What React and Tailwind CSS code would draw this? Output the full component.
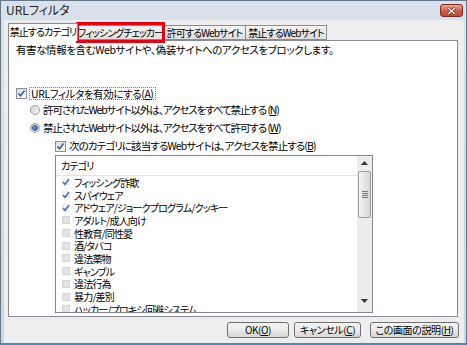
import React from 'react';

const jp = "font-['Noto_Sans_CJK_JP','Noto_Sans',sans-serif] [font-feature-settings:'palt']";

const categories = [
  { name: 'フィッシング詐欺', on: true },
  { name: 'スパイウェア', on: true },
  { name: 'アドウェア/ジョークプログラム/クッキー', on: true },
  { name: 'アダルト/成人向け', on: false },
  { name: '性教育/同性愛', on: false },
  { name: '酒/タバコ', on: false },
  { name: '違法薬物', on: false },
  { name: 'ギャンブル', on: false },
  { name: '違法行為', on: false },
  { name: '暴力/差別', on: false },
  { name: 'ハッカー/プロキシ回避システム', on: false },
];

// Vista風チェックボックス
function CheckBox() {
  return (
    <span className="flex h-[11px] w-[11px] shrink-0 items-center justify-center border border-[#8e8f8f] bg-gradient-to-br from-[#dadada] to-white">
      <svg width="9" height="9" viewBox="0 0 9 9">
        <path d="M1.5 4.5 L3.6 6.8 L7.6 1.6" fill="none" stroke="#3a5a9e" strokeWidth="1.6" />
      </svg>
    </span>
  );
}

function Radio({ checked }) {
  return (
    <span className="flex h-[10px] w-[10px] shrink-0 items-center justify-center rounded-full border border-[#9a9a9a] bg-gradient-to-br from-[#d0d0d0] to-[#fafafa]">
      {checked && (
        <span className="h-[6px] w-[6px] rounded-full border border-[#1f4e9c] bg-gradient-to-br from-[#7fb2f0] to-[#1d5fc4]" />
      )}
    </span>
  );
}

function SmallCheck({ on }) {
  if (on) {
    return (
      <span className="flex h-[8px] w-[8px] shrink-0 items-center justify-center bg-[#eef1f6]">
        <svg width="8" height="8" viewBox="0 0 8 8">
          <path d="M1 4 L3 6.3 L7 1.3" fill="none" stroke="#4a68b0" strokeWidth="1.5" />
        </svg>
      </span>
    );
  }
  return <span className="h-[8px] w-[8px] shrink-0 border border-[#d6d6d6] bg-[#e4e4e4]" />;
}

function Btn({ w, children }) {
  return (
    <button className={`${w} flex h-[16px] items-center justify-center whitespace-nowrap rounded-[3px] border border-[#707070] bg-gradient-to-b from-[#f4f4f4] via-[#ebebeb] to-[#d6d6d6] text-[10px] leading-none text-black`}>
      {children}
    </button>
  );
}

export default function App() {
  return (
    <div className={`${jp} flex h-[345px] w-[467px] flex-col border-x border-t border-b-2 border-[#66778a] border-b-[#3b8fc6] bg-gradient-to-b from-[#d9e2ec] to-[#c8d5e3] text-black`}>
      {/* タイトルバー */}
      <div className="flex h-[19px] items-start justify-between pl-[5px] pr-[3px]">
        <span className="mt-[2px] text-[12px] leading-[14px] text-[#222]">URLフィルタ</span>
        <span className="mt-[3px] flex h-[13px] w-[23px] items-center justify-center rounded-[3px] border border-[#7a2c22] bg-gradient-to-b from-[#eaa796] via-[#d2604a] to-[#c4442e]">
          <svg width="9" height="8" viewBox="0 0 9 8">
            <path d="M1 1 L8 7 M8 1 L1 7" stroke="#5a1a12" strokeWidth="2.6" />
            <path d="M1 1 L8 7 M8 1 L1 7" stroke="#fff" strokeWidth="1.5" />
          </svg>
        </span>
      </div>

      {/* 本体 */}
      <div className="ml-[3px] mr-[2px] flex flex-1 flex-col bg-[#eeeeee] pl-[4px] pr-[5px] pt-[3px]">
        {/* タブ */}
        <div className="flex h-[17px] items-end whitespace-nowrap text-[10px] leading-none tracking-[-0.9px]">
          <div className="relative z-10 mb-[-1px] flex h-[18px] w-[70px] items-center justify-center border border-b-0 border-[#898c95] bg-white pb-[2px]">
            禁止するカテゴリ
          </div>
          <div className="relative flex h-[15px] w-[86px] items-center justify-center border border-l-0 border-[#898c95] bg-gradient-to-b from-[#f5f5f5] to-[#dedede]">
            フィッシングチェッカー
            <span className="absolute -bottom-[4px] -left-[2px] -right-[2px] -top-[4px] border-[3px] border-[#e8000f]" />
          </div>
          <div className="flex h-[15px] w-[82px] items-center justify-center border border-l-0 border-[#898c95] bg-gradient-to-b from-[#f5f5f5] to-[#dedede]">
            許可するWebサイト
          </div>
          <div className="flex h-[15px] w-[81px] items-center justify-center border border-l-0 border-[#898c95] bg-gradient-to-b from-[#f5f5f5] to-[#dedede]">
            禁止するWebサイト
          </div>
        </div>

        {/* タブパネル */}
        <div className="mr-[1px] flex h-[277px] flex-col whitespace-nowrap border border-[#898c95] bg-white text-[10.5px] leading-[12px] tracking-[-0.7px]">
          <p className="ml-[7px] mt-[3px] tracking-[-0.4px]">有害な情報を含むWebサイトや、偽装サイトへのアクセスをブロックします。</p>

          <div className="ml-[7px] mt-[29px] flex h-[16px] items-center gap-[2px]">
            <CheckBox />
            <span className="border border-dotted border-[#777] px-[1px] leading-[11px] tracking-[-0.4px]">
              URLフィルタを有効にする(<span className="underline">A</span>)
            </span>
          </div>
          <div className="ml-[21px] flex h-[18px] items-center gap-[3px] tracking-[-1.1px]">
            <Radio />
            <span>許可されたWebサイト以外は、アクセスをすべて禁止する (<span className="underline">N</span>)</span>
          </div>
          <div className="ml-[21px] flex h-[18px] items-center gap-[3px] tracking-[-1.1px]">
            <Radio checked />
            <span>禁止されたWebサイト以外は、アクセスをすべて許可する (<span className="underline">W</span>)</span>
          </div>
          <div className="ml-[46px] flex h-[18px] items-center gap-[3px] tracking-[-0.9px]">
            <CheckBox />
            <span>次のカテゴリに該当するWebサイトは、アクセスを禁止する(<span className="underline">B</span>)</span>
          </div>

          {/* カテゴリ一覧 */}
          <div className="ml-[46px] flex h-[158px] w-[318px] border border-[#828790] text-[10px] tracking-[-0.8px]">
            <div className="flex flex-1 flex-col overflow-hidden">
              <div className="flex h-[20px] shrink-0 items-center border-b border-[#e3e3e3] pl-[5px]">カテゴリ</div>
              {categories.map((c) => (
                <div key={c.name} className="flex h-[12.7px] shrink-0 items-center gap-[4px] pl-[6px] leading-[11px]">
                  <SmallCheck on={c.on} />
                  <span>{c.name}</span>
                </div>
              ))}
            </div>
            <div className="flex w-[15px] flex-col bg-[#ececec]">
              <div className="flex h-[14px] items-center justify-center">
                <svg width="7" height="4" viewBox="0 0 7 4"><path d="M0 4 L3.5 0 L7 4Z" fill="#333" /></svg>
              </div>
              <div className="mx-[1px] mt-[1px] flex h-[47px] items-center justify-center rounded-[2px] border border-[#9b9b9b] bg-gradient-to-r from-[#f3f3f3] to-[#d8d8d8]">
                <div className="flex w-[6px] flex-col gap-[1px]">
                  <span className="h-px bg-[#777]" />
                  <span className="h-px bg-[#777]" />
                  <span className="h-px bg-[#777]" />
                  <span className="h-px bg-[#777]" />
                </div>
              </div>
              <div className="flex-1" />
              <div className="mb-[4px] flex h-[14px] items-center justify-center">
                <svg width="7" height="4" viewBox="0 0 7 4"><path d="M0 0 L3.5 4 L7 0Z" fill="#333" /></svg>
              </div>
            </div>
          </div>
        </div>

        {/* ボタン */}
        <div className="mt-[5px] flex justify-end tracking-[-0.4px]">
          <Btn w="w-[62px]">OK(<span className="underline">O</span>)</Btn>
          <div className="w-[5px]" />
          <Btn w="w-[67px]">キャンセル(<span className="underline">C</span>)</Btn>
          <div className="w-[9px]" />
          <Btn w="w-[89px]">この画面の説明(<span className="underline">H</span>)</Btn>
        </div>
      </div>
    </div>
  );
}
